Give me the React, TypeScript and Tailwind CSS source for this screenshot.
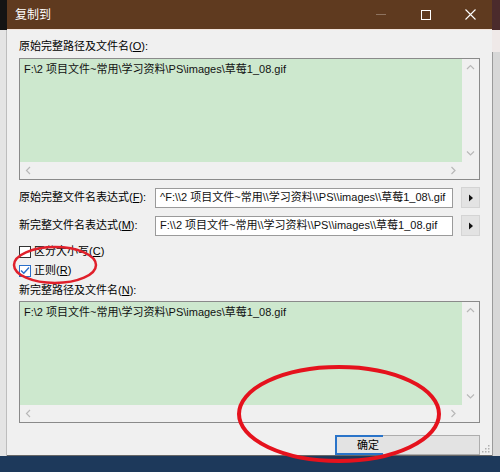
import React from "react";

const font = { fontFamily: '"Liberation Sans", "Noto Sans CJK SC", sans-serif' };

const Arrow = () => (
  <button className="w-[19px] h-[21px] flex items-center justify-center border border-[#d4d4d4] bg-[#e3e3e3]">
    <svg width="6" height="8" viewBox="0 0 6 8">
      <path d="M1 0.5 L5 4 L1 7.5 Z" fill="#111" />
    </svg>
  </button>
);

const Chevron = ({ dir }: { dir: "up" | "down" | "left" | "right" }) => {
  const d = {
    up: "M1 5 L4.5 1.5 L8 5",
    down: "M1 1.5 L4.5 5 L8 1.5",
    left: "M5 1 L1.5 4.5 L5 8",
    right: "M1.5 1 L5 4.5 L1.5 8",
  }[dir];
  const w = dir === "up" || dir === "down" ? 9 : 7;
  const h = dir === "up" || dir === "down" ? 7 : 9;
  return (
    <svg width={w} height={h} viewBox={`0 0 ${w} ${h}`}>
      <path d={d} fill="none" stroke="#b8b8b8" strokeWidth="1.2" />
    </svg>
  );
};

const PathBox = ({ text }: { text: string }) => (
  <div className="h-[122px] shrink-0 border border-[#8a8a8a] flex flex-col bg-[#f0f0f0]">
    <div className="flex flex-1">
      <div className="flex-1 bg-[#cde8ce] px-[4px] pt-[3px] text-[11px] leading-[14px] text-[#111] whitespace-nowrap overflow-hidden">
        {text}
      </div>
      <div className="w-[17px] flex flex-col items-center justify-between py-[5px] bg-[#f0f0f0]">
        <Chevron dir="up" />
        <Chevron dir="down" />
      </div>
    </div>
    <div className="h-[17px] flex">
      <div className="flex-1 flex items-center justify-between px-[5px]">
        <Chevron dir="left" />
        <Chevron dir="right" />
      </div>
      <div className="w-[17px]" />
    </div>
  </div>
);

const Label = ({ text, k }: { text: string; k: string }) => (
  <div className="h-[14px] shrink-0 flex items-center text-[11px] text-black whitespace-nowrap overflow-visible">
    <span>
      {text}(<u>{k}</u>):
    </span>
  </div>
);

const ExprRow = ({ label, k, value }: { label: string; k: string; value: string }) => (
  <div className="flex items-center h-[21px] shrink-0">
    <div className="w-[136px]">
      <Label text={label} k={k} />
    </div>
    <div className="w-[298px] h-[20px] border border-[#9a9a9a] bg-white flex items-center px-[4px] text-[11px] text-[#111] whitespace-nowrap overflow-hidden">
      {value}
    </div>
    <div className="ml-[8px]">
      <Arrow />
    </div>
  </div>
);

const Check = ({ checked, text, k }: { checked?: boolean; text: string; k: string }) => (
  <div className="flex items-center gap-[3px] h-[13px] shrink-0">
    <div
      className={
        "w-[12px] h-[12px] border bg-white flex items-center justify-center " +
        (checked ? "border-[#2a6fc9]" : "border-[#333]")
      }
    >
      {checked && (
        <svg width="10" height="9" viewBox="0 0 10 9">
          <path d="M1 4.5 L3.8 7.3 L9 1.5" fill="none" stroke="#2a6fc9" strokeWidth="1.4" />
        </svg>
      )}
    </div>
    <span className="text-[11px] leading-[13px] text-black">
      {text}(<u>{k}</u>)
    </span>
  </div>
);

export default function App() {
  return (
    <div className="w-[500px] h-[472px] bg-[#1d395b] flex flex-col overflow-hidden relative" style={font}>
      <div className="flex h-[456px] shrink-0">
        {/* window behind, left */}
        <div className="w-[7px] flex flex-col">
          <div className="h-[30px] bg-[#141414]" />
          <div className="flex-1 bg-[#e4e4e4] border-r border-[#bdbdbd]" />
        </div>

        {/* dialog */}
        <div className="w-[485px] flex flex-col bg-[#f0f0f0] border-b border-[#666] overflow-hidden">
          <div className="h-[29px] shrink-0 bg-[#5f3a1f] flex items-center pl-[8px]">
            <span className="text-[12px] text-white">复制到</span>
            <div className="ml-auto flex items-center h-full">
              <div className="w-[46px] h-full flex items-center justify-center">
                <div className="w-[10px] h-px bg-[#8e735f]" />
              </div>
              <div className="w-[44px] h-full flex items-center justify-center">
                <div className="w-[10px] h-[10px] border border-white" />
              </div>
              <div className="w-[44px] h-full flex items-center justify-center">
                <svg width="11" height="11" viewBox="0 0 11 11">
                  <path d="M0.5 0.5 L10.5 10.5 M10.5 0.5 L0.5 10.5" stroke="#fff" strokeWidth="1.1" />
                </svg>
              </div>
            </div>
          </div>
          <div className="h-px shrink-0 bg-[#f3e4dc]" />

          <div className="flex-1 flex flex-col px-[12px] pt-[9px] relative">
            <Label text="原始完整路径及文件名" k="O" />
            <div className="mt-[5px]">
              <PathBox text="F:\2 项目文件~常用\学习资料\PS\images\草莓1_08.gif" />
            </div>
            <div className="mt-[7px]">
              <ExprRow
                label="原始完整文件名表达式"
                k="F"
                value="^F:\\2 项目文件~常用\\学习资料\\PS\\images\\草莓1_08\.gif"
              />
            </div>
            <div className="mt-[7px]">
              <ExprRow
                label="新完整文件名表达式"
                k="M"
                value="F:\\2 项目文件~常用\\学习资料\\PS\\images\\草莓1_08.gif"
              />
            </div>
            <div className="mt-[9px]">
              <Check text="区分大小写" k="C" />
            </div>
            <div className="mt-[6px]">
              <Check checked text="正则" k="R" />
            </div>
            <div className="mt-[6px]">
              <Label text="新完整路径及文件名" k="N" />
            </div>
            <div className="mt-[4px]">
              <PathBox text="F:\2 项目文件~常用\学习资料\PS\images\草莓1_08.gif" />
            </div>
            <div className="mt-[12px] flex justify-end shrink-0">
              <button className="relative w-[145px] h-[20px] border border-[#adadad] bg-[#e3e3e3] text-[11px] text-black flex items-center">
                <span className="ml-[21px]">确定</span>
                <span className="absolute -left-px -top-px -bottom-px w-[48px] border-2 border-r-0 border-[#2a74c9]" />
              </button>
            </div>
            {/* resize grip */}
            <svg className="absolute right-[2px] bottom-[2px]" width="8" height="8" viewBox="0 0 8 8">
              <rect x="6" y="0" width="1.5" height="1.5" fill="#b0b0b0" />
              <rect x="3" y="3" width="1.5" height="1.5" fill="#b0b0b0" />
              <rect x="6" y="3" width="1.5" height="1.5" fill="#b0b0b0" />
              <rect x="0" y="6" width="1.5" height="1.5" fill="#b0b0b0" />
              <rect x="3" y="6" width="1.5" height="1.5" fill="#b0b0b0" />
              <rect x="6" y="6" width="1.5" height="1.5" fill="#b0b0b0" />
            </svg>
          </div>
        </div>

        {/* window behind, right */}
        <div className="w-[8px] flex flex-col">
          <div className="h-[30px] bg-[#4b2b2c]" />
          <div className="h-[22px] bg-[#efe9e8]" />
          <div className="flex-1 bg-[#d7d7d7] border-l border-[#9a9a9a]" />
        </div>
      </div>

      {/* red annotation ellipses */}
      <svg className="absolute inset-0 pointer-events-none" width="500" height="472" viewBox="0 0 500 472">
        <ellipse cx="55" cy="265" rx="41" ry="18" fill="none" stroke="#e0202b" strokeWidth="2.5" />
        <ellipse cx="339" cy="414" rx="100" ry="47" fill="none" stroke="#e5121d" strokeWidth="4" />
      </svg>
    </div>
  );
}
